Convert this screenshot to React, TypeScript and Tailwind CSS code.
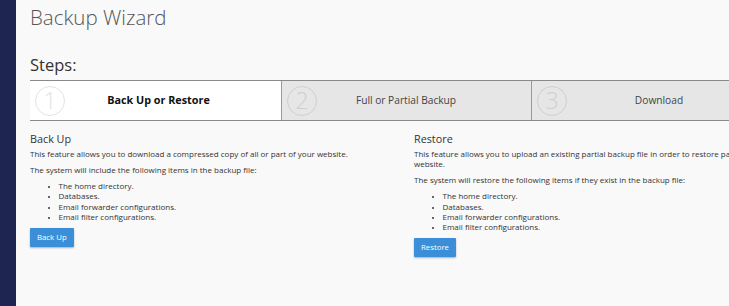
import React from 'react';

const ITEMS = [
  'The home directory.',
  'Databases.',
  'Email forwarder configurations.',
  'Email filter configurations.',
];

const STEPS = [
  { n: '1', label: 'Back Up or Restore', active: true, pad: 'pr-[29px]' },
  { n: '2', label: 'Full or Partial Backup', active: false, pad: 'pr-[36px]' },
  { n: '3', label: 'Download', active: false, pad: 'pr-[30px]' },
];

function StepBadge({ n, active }: { n: string; active: boolean }) {
  const c = active ? 'border-[#e3e3e3] text-[#e3e3e3]' : 'border-[#cfcfcf] text-[#cfcfcf]';
  return (
    <div className={`w-[30px] h-[30px] shrink-0 rounded-full border-[1.5px] flex items-center justify-center text-[23px] font-light leading-none ${c}`}>
      {n}
    </div>
  );
}

function Section({ title, body, intro, button }: { title: string; body: string; intro: string; button: string }) {
  return (
    <div>
      <h4 className="text-[10.8px] font-medium text-[#333] leading-[14px] mb-[3px]">{title}</h4>
      <p className="mb-[5.7px]">{body}</p>
      <p className="mb-[5.7px]">{intro}</p>
      <ul className="list-disc pl-[28.5px] mb-[5.5px] marker:text-[6px]">
        {ITEMS.map(i => <li key={i}>{i}</li>)}
      </ul>
      <button className="h-[19px] px-[7px] bg-[#3b8ed8] text-white text-[7.8px] rounded-[1px] shadow-[0_1px_2px_rgba(0,0,0,0.3)]">
        {button}
      </button>
    </div>
  );
}

export default function App() {
  return (
    <div className="flex w-[729px] h-[306px] overflow-hidden bg-[#f9f9f9] font-['Open_Sans',sans-serif] text-[#333]">
      <aside className="w-[16px] shrink-0 bg-[#1d2550]" />
      <main className="flex-1 pl-[14px] min-w-0">
        <div className="w-[780px]">
          <h1 className="text-[20.5px] font-light leading-[30px] mt-[2px] text-[#555]">Backup Wizard</h1>
          <h2 className="text-[16.5px] leading-[22px] mt-[22px] mb-[4px] text-[#333]">Steps:</h2>
          <div className="flex h-[41px] border-y border-[#8a8a8a]">
            {STEPS.map((s, i) => (
              <div
                key={s.n}
                className={`flex items-center pl-[5px] ${s.active ? 'bg-white w-[251px]' : 'bg-[#e6e6e6] w-[250px]'} ${i > 0 ? 'border-l border-[#9a9a9a]' : ''}`}
              >
                <StepBadge n={s.n} active={s.active} />
                <div className={`flex-1 text-center ${s.pad} ${s.active ? 'text-[10.8px] font-bold text-[#111]' : 'text-[10.2px] text-[#444]'}`}>
                  {s.label}
                </div>
              </div>
            ))}
          </div>
          <div className="grid grid-cols-[384px_368px] mt-[11px] text-[8px] leading-[10.3px]">
            <Section
              title="Back Up"
              body="This feature allows you to download a compressed copy of all or part of your website."
              intro="The system will include the following items in the backup file:"
              button="Back Up"
            />
            <Section
              title="Restore"
              body="This feature allows you to upload an existing partial backup file in order to restore part of your website."
              intro="The system will restore the following items if they exist in the backup file:"
              button="Restore"
            />
          </div>
        </div>
      </main>
    </div>
  );
}
